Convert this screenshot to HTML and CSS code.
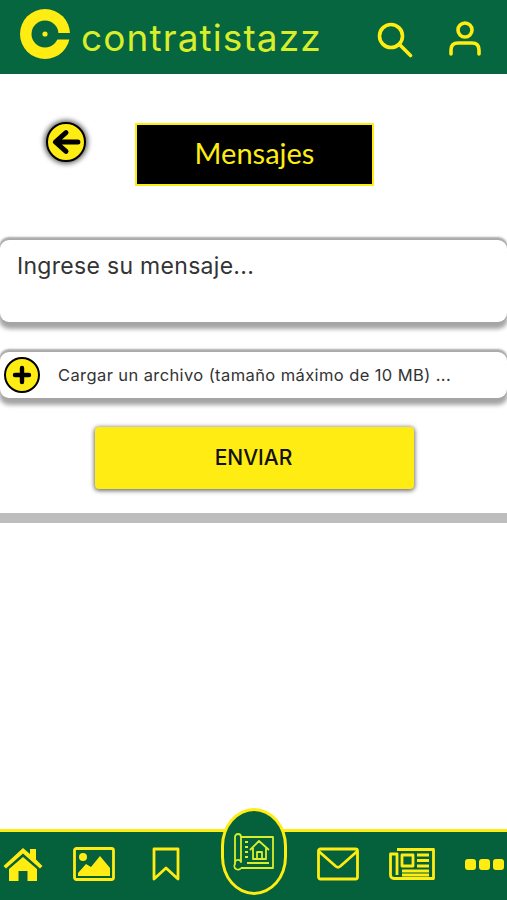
FILE: index.html
```html
<!DOCTYPE html>
<html lang="es">

<head>
   <meta charset="UTF-8">
   <meta name="viewport" content="width=device-width, initial-scale=1.0">
   <title>Mensajes</title>
   <link rel="stylesheet" href="styles.css">
</head>

<body>
   <header class="topbar">
      <div class="brand">
         <svg class="brand-mark" viewBox="0 0 50 50">
            <circle cx="25" cy="25" r="25" fill="#ffec12" />
            <circle cx="25" cy="25" r="13.5" fill="#05663f" />
            <rect x="30" y="24" width="21" height="6.5" fill="#05663f" />
            <circle cx="25" cy="25" r="2.6" fill="#ffec12" />
         </svg>
         <span class="brand-name">contratistazz</span>
      </div>
      <svg class="top-icon search-icon" viewBox="0 0 36 36">
         <circle cx="14" cy="14" r="11.5" />
         <path d="M22.5 22.5 L33.5 33.5" />
      </svg>
      <svg class="top-icon user-icon" viewBox="0 0 32 36">
         <circle cx="16" cy="9" r="7" />
         <path d="M2 33 V29 Q2 22 9 22 H23 Q30 22 30 29 V33" />
      </svg>
   </header>

   <main class="content">
      <div class="title-row">
         <button class="back-btn">
            <svg viewBox="0 0 24 24">
               <path d="M21.5 12 H5 M12 4.5 L3.5 12 L12 19.5" />
            </svg>
         </button>
         <h1 class="title">Mensajes</h1>
      </div>

      <div class="field message-field">Ingrese su mensaje...</div>

      <div class="field file-field">
         <span class="plus-btn">
            <svg viewBox="0 0 24 24">
               <path d="M12 5 V19 M5 12 H19" />
            </svg>
         </span>
         <span>Cargar un archivo (tamaño máximo de 10 MB) ...</span>
      </div>

      <button class="send-btn">ENVIAR</button>

      <hr class="divider">
   </main>

   <nav class="bottombar">
      <svg class="nav-icon home-icon" viewBox="0 0 40 34">
         <path class="solid" d="M20 1 L27 7 V2 H33 V12.5 L39.5 19 L37 21.5 L20 6.5 L3 21.5 L0.5 19 Z" />
         <path class="solid" d="M20 10 L34 22 V34 H24.5 V24 H15.5 V34 H6 V22 Z" />
      </svg>
      <svg class="nav-icon image-icon" viewBox="0 0 42 34">
         <rect x="1.5" y="1.5" width="39" height="31" rx="2" />
         <circle class="solid" cx="10" cy="10" r="4" />
         <path class="solid" d="M5 26 L13 17 L18 20 L27 9 L37 21 V29 H5 Z" />
      </svg>
      <svg class="nav-icon bookmark-icon" viewBox="0 0 28 34">
         <path d="M2 2 H26 V32 L14 21 L2 32 Z" />
      </svg>

      <a class="plans-btn">
         <svg viewBox="0 0 42 40">
            <path d="M8 5 H40 V36 H8" />
            <path d="M2 5 A3 3 0 0 1 8 5 V30 A3 3 0 0 0 2 32 Z" />
            <path d="M2 32 A3.5 3.5 0 0 0 8 36" />
            <path d="M12 10 H15 M12 15 H15 M12 20 H15 M12 25 H15 M14 31 H36" />
            <path d="M17 18 L26 9 L36 18 M20 16 V27 H33 V16 M24 27 V20 H29 V27" />
         </svg>
      </a>

      <svg class="nav-icon mail-icon" viewBox="0 0 42 33">
         <rect x="1.5" y="1.5" width="39" height="30" rx="2" />
         <path d="M2 4 L19 19 Q21 20.5 23 19 L40 4" />
      </svg>
      <svg class="nav-icon news-icon" viewBox="0 0 46 32">
         <path d="M8 1.5 H44.5 V30.5 H5 Q1.5 30.5 1.5 27 V6 H8 V27" />
         <rect x="13" y="7" width="11" height="11" />
         <path d="M28 7 H40 M28 12.5 H40 M28 18 H40 M13 23 H40 M13 27 H40" />
      </svg>
      <div class="dots">
         <span></span>
         <span></span>
         <span></span>
      </div>
   </nav>
</body>

</html>
```

FILE: styles.css
```css
html,
body {
   height: 100%;
   margin: 0;
}

body {
   display: flex;
   flex-direction: column;
   background: white;
   font-family: Inter, 'Noto Sans', sans-serif;
   color: #333;
   overflow: hidden;
}

button {
   font-family: inherit;
   padding: 0;
   border: 0;
}

/* barra de cima */
.topbar {
   height: 74px;
   flex: none;
   display: flex;
   align-items: center;
   padding-left: 20px;
   background: #05663f;
   box-sizing: border-box;
}

.brand {
   display: flex;
   align-items: center;
   gap: 11px;
   width: 357px;
   height: 50px;
   margin-top: -6px;
}

.brand-mark {
   width: 50px;
   height: 50px;
   flex: none;
}

.brand-name {
   font-size: 37px;
   font-weight: 400;
   letter-spacing: 1.1px;
   color: #d9ee2b;
   margin-top: 6px;
}

.top-icon {
   fill: none;
   stroke: #ffec12;
   stroke-width: 3.6;
   stroke-linecap: round;
}

.search-icon {
   width: 36px;
   height: 36px;
   margin-top: 5px;
}

.user-icon {
   width: 32px;
   height: 36px;
   margin-left: 36px;
   margin-top: 3px;
}

/* conteudo */
.content {
   flex: 1;
   display: flex;
   flex-direction: column;
}

.title-row {
   display: flex;
   align-items: flex-start;
   padding: 48px 0 0 46px;
}

.back-btn {
   width: 40px;
   height: 40px;
   margin-right: 49px;
   border: 2px solid black;
   border-radius: 50%;
   background: #ffec12;
   box-shadow: 0 0 5px 2px rgba(0, 0, 0, 0.6);
   box-sizing: border-box;
   display: flex;
   align-items: center;
   justify-content: center;
}

.back-btn svg {
   width: 30px;
   height: 30px;
   fill: none;
   stroke: black;
   stroke-width: 4;
   stroke-linecap: round;
   stroke-linejoin: round;
}

.title {
   width: 239px;
   height: 63px;
   margin: 1px 0 0;
   background: black;
   border: 2px solid #ffec12;
   box-sizing: border-box;
   font-family: Lato, sans-serif;
   font-size: 29px;
   font-weight: 400;
   line-height: 55px;
   text-align: center;
   color: #ffec12;
}

.field {
   background: white;
   border-radius: 9px;
   box-shadow: 0 -2px 2px 1px #aaa, 0 6px 4px 1px #a5a5a5;
}

.message-field {
   height: 82px;
   margin-top: 54px;
   padding: 10px 17px 0;
   box-sizing: border-box;
   font-size: 23px;
   letter-spacing: 0.3px;
   line-height: 32px;
}

.file-field {
   height: 46px;
   margin-top: 30px;
   padding-left: 4px;
   display: flex;
   align-items: center;
   gap: 18px;
   font-size: 16.5px;
   letter-spacing: 0.4px;
}

.plus-btn {
   width: 36px;
   height: 36px;
   border: 2px solid black;
   border-radius: 50%;
   background: #ffec12;
   box-sizing: border-box;
   display: flex;
   align-items: center;
   justify-content: center;
}

.plus-btn svg {
   width: 24px;
   height: 24px;
   fill: none;
   stroke: black;
   stroke-width: 4.4;
   stroke-linecap: round;
}

.send-btn {
   width: 319px;
   height: 62px;
   margin: 29px 0 0 95px;
   padding: 0 2px 2px 0;
   background: #ffec12;
   border-radius: 4px;
   box-shadow: 0 1px 4px 1px rgba(0, 0, 0, 0.55);
   font-size: 21px;
   font-weight: 500;
   color: #111;
}

.divider {
   width: 100%;
   height: 10px;
   margin: 24px 0 0;
   border: 0;
   background: #bdbdbd;
}

/* barra de baixo */
.bottombar {
   position: relative;
   height: 71px;
   flex: none;
   display: flex;
   align-items: center;
   padding: 0 0 4px 3px;
   background: #05603c;
   border-top: 3px solid #ffec12;
   box-sizing: border-box;
}

.nav-icon {
   height: 34px;
   flex: none;
   fill: none;
   stroke: #ffec12;
   stroke-width: 2.8;
   stroke-linejoin: round;
}

.nav-icon .solid {
   fill: #ffec12;
   stroke: none;
}

.home-icon {
   width: 40px;
   margin-right: 30px;
}

.image-icon {
   width: 42px;
   margin-right: 37px;
}

.bookmark-icon {
   width: 28px;
   margin-right: 137px;
}

.mail-icon {
   width: 42px;
   margin-right: 30px;
}

.news-icon {
   width: 46px;
   margin-right: 30px;
}

.plans-btn {
   position: absolute;
   left: 221px;
   top: -24px;
   width: 66px;
   height: 87px;
   background: #05603c;
   border: 3px solid #ffec12;
   border-radius: 33px / 38px;
   box-sizing: border-box;
   display: flex;
   justify-content: center;
   padding-top: 21px;
}

.plans-btn svg {
   width: 42px;
   height: 40px;
   fill: none;
   stroke: #d9ee2b;
   stroke-width: 1.8;
   stroke-linejoin: round;
}

.dots {
   display: flex;
   gap: 3px;
}

.dots span {
   width: 11px;
   height: 11px;
   border-radius: 3px;
   background: #ffec12;
}
```
